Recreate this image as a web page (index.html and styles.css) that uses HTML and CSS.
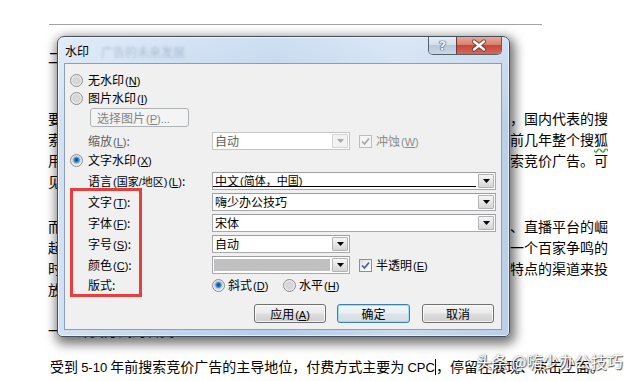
FILE: index.html
```html
<!DOCTYPE html>
<html lang="zh-CN">
<head>
<meta charset="utf-8">
<title>水印</title>
<link rel="stylesheet" href="styles.css">
</head>
<body>
<div class="page">
  <div class="rule"></div>
  <div class="doc">
    <div class="ln head">二、互联网广告的发展历程</div>
    <div class="para p1">
      <div class="ln">要说到互联网广告，就不得不提搜索引擎广告，早在十几年前就已经兴起了，国内代表的搜</div>
      <div class="ln">索引擎是百度，谷歌在当时也占有一定的份额，而另一边，在过去十多年的前几年整个搜<span class="spell">狐</span></div>
      <div class="ln">用户流量的入口都集中在搜索引擎上，因此当时最主要的广告形式就便是搜索竞价广告。可</div>
      <div class="ln">见，搜索竞价广告在当时占据了绝对的主导地位。</div>
    </div>
    <div class="para p2">
      <div class="ln">而随着近几年移动互联网的快速发展，各类社交媒体、资讯平台以及短视频、直播平台的崛</div>
      <div class="ln">起，互联网广告的形式与玩法变得越来越多样化，整个行业也逐渐进入到了一个百家争鸣的</div>
      <div class="ln">时代。广告主可以根据自身产品的属性与受众人群，选择更加符合目标用户特点的渠道来投</div>
      <div class="ln">放广告，从而获得更好的营销效果。</div>
    </div>
    <div class="ln head2">一、计费方式的转变</div>
    <div class="ln last">受到 <span class="lat">5-10</span> 年前搜索竞价广告的主导地位，付费方式主要为 <span class="lat">CPC</span><span class="caret"></span>，停留在展现、点击上面。</div>
  </div>

  <div class="dialog">
    <div class="titlebar">
      <span class="title">水印</span>
      <span class="ghost">广告的未来发展</span>
      <div class="caption-btns">
        <div class="cbtn help">?</div>
        <div class="cbtn close">
          <svg width="44" height="17" viewBox="0 0 44 17">
            <path d="M17 4.5 L27 12.5 M27 4.5 L17 12.5" stroke="#5a2a22" stroke-width="4.2" stroke-linecap="round" fill="none" opacity="0.75"/>
            <path d="M17 4.5 L27 12.5 M27 4.5 L17 12.5" stroke="#ffffff" stroke-width="2.4" stroke-linecap="round" fill="none"/>
          </svg>
        </div>
      </div>
    </div>
    <div class="panel">
      <div class="row opt r1"><span class="radio"></span><span class="otext">无水印<span class="mn">(<u>N</u>)</span></span></div>
      <div class="row opt"><span class="radio"></span><span class="otext">图片水印<span class="mn">(<u>I</u>)</span></span></div>
      <div class="row r3"><div class="pickbtn">选择图片<span class="mn">(<u>P</u>)...</span></div></div>
      <div class="row r4">
        <span class="lbl dim">缩放<span class="mn">(<u>L</u>)</span>:</span>
        <div class="combo short disabled"><span class="val">自动</span><span class="drop"><svg width="7" height="4" viewBox="0 0 7 4"><polygon points="0,0 7,0 3.5,4" fill="#a9a9a9"/></svg></span></div>
        <span class="check dis"><svg width="11" height="11" viewBox="0 0 11 11"><path d="M2 5.5 L4.5 8 L9 2.5" fill="none" stroke="#a6a6a6" stroke-width="1.7"/></svg></span>
        <span class="ctext dim2">冲蚀<span class="mn">(<u>W</u>)</span></span>
      </div>
      <div class="row opt r5"><span class="radio on"></span><span class="otext">文字水印<span class="mn">(<u>X</u>)</span></span></div>
      <div class="row r6">
        <span class="lbl">语言<span class="mn">(国家/地区)</span><span class="mn">(<u>L</u>)</span>:</span>
        <div class="combo long"><span class="val focus">中文<span class="mn">(简体，中国)</span></span><span class="drop"><svg width="7" height="4" viewBox="0 0 7 4"><polygon points="0,0 7,0 3.5,4" fill="#000"/></svg></span></div>
      </div>
      <div class="row rf">
        <span class="lbl">文字<span class="mn">(<u>T</u>)</span>:</span>
        <div class="combo long"><span class="val">嗨少办公技巧</span><span class="drop"><svg width="7" height="4" viewBox="0 0 7 4"><polygon points="0,0 7,0 3.5,4" fill="#000"/></svg></span></div>
      </div>
      <div class="row rf">
        <span class="lbl">字体<span class="mn">(<u>F</u>)</span>:</span>
        <div class="combo long"><span class="val">宋体</span><span class="drop"><svg width="7" height="4" viewBox="0 0 7 4"><polygon points="0,0 7,0 3.5,4" fill="#000"/></svg></span></div>
      </div>
      <div class="row rf">
        <span class="lbl">字号<span class="mn">(<u>S</u>)</span>:</span>
        <div class="combo short"><span class="val">自动</span><span class="drop"><svg width="7" height="4" viewBox="0 0 7 4"><polygon points="0,0 7,0 3.5,4" fill="#000"/></svg></span></div>
      </div>
      <div class="row rf">
        <span class="lbl">颜色<span class="mn">(<u>C</u>)</span>:</span>
        <div class="combo short"><span class="val"><span class="swatch"></span></span><span class="drop"><svg width="7" height="4" viewBox="0 0 7 4"><polygon points="0,0 7,0 3.5,4" fill="#000"/></svg></span></div>
        <span class="check"><svg width="11" height="11" viewBox="0 0 11 11"><path d="M2 5.5 L4.5 8 L9 2.5" fill="none" stroke="#4b5f92" stroke-width="1.7"/></svg></span>
        <span class="ctext">半透明<span class="mn">(<u>E</u>)</span></span>
      </div>
      <div class="row r11">
        <span class="lbl">版式:</span>
        <span class="choice first"><span class="radio on"></span><span class="otext">斜式<span class="mn">(<u>D</u>)</span></span></span>
        <span class="choice"><span class="radio"></span><span class="otext">水平<span class="mn">(<u>H</u>)</span></span></span>
      </div>
      <div class="row btns">
        <div class="btn">应用<span class="mn">(<u>A</u>)</span></div>
        <div class="btn default">确定</div>
        <div class="btn">取消</div>
      </div>
    </div>
  </div>

  <div class="redbox"></div>
  <div class="watermark">头条 @嗨少办公技巧</div>
</div>
</body>
</html>
```

FILE: styles.css
```css
* { box-sizing: border-box; }
html, body { margin: 0; padding: 0; background: #fff; }
.page {
  position: relative;
  width: 631px;
  height: 381px;
  overflow: hidden;
  background: #fff;
  font-family: "Noto Sans CJK SC", "Liberation Sans", sans-serif;
}
.rule {
  margin: 24px 0 0 49px;
  width: 493px;
  height: 1px;
  background: #a3a3a3;
}
.doc {
  padding-left: 48px;
  font-size: 14px;
  line-height: 21px;
  color: #000;
}
.ln { white-space: nowrap; height: 21px; }
.head { margin-top: 22px; }
.p1 { margin-top: 40px; }
.p2 { margin-top: 24px; }
.head2 { margin-top: 20px; }
.last { margin-top: 15px; padding-left: 2px; }
.lat { font-family: "Liberation Sans", sans-serif; font-size: 13px; }
.spell { text-decoration: underline wavy #3fa33f; text-underline-offset: 3px; }
.caret {
  display: inline-block;
  width: 1px;
  height: 16px;
  background: #000;
  vertical-align: -3px;
}

/* dialog */
.dialog {
  position: absolute;
  left: 57px;
  top: 36px;
  width: 453px;
  height: 301px;
  display: flex;
  flex-direction: column;
  padding: 0 7px 6px 6px;
  border: 1px solid #46505d;
  border-radius: 7px 7px 5px 5px;
  background:
    linear-gradient(to bottom, rgba(255,255,255,0.35), rgba(255,255,255,0) 30%),
    linear-gradient(to right, #d2e2f4 0%, #c3d8ef 22%, #b5ceea 48%, #c8dbf0 75%, #bad0e9 100%);
  box-shadow: inset 0 0 0 1px rgba(255,255,255,0.6), 2px 4px 11px 3px rgba(0,0,0,0.55);
  font-size: 12px;
  color: #000;
}
.titlebar {
  height: 26px;
  display: flex;
  align-items: flex-start;
  flex: none;
}
.title {
  padding-left: 1px;
  line-height: 28px;
  font-size: 12px;
  color: #000;
}
.ghost {
  margin-left: 12px;
  line-height: 30px;
  font-size: 12px;
  color: rgba(70, 95, 130, 0.28);
  filter: blur(1.3px);
}
.caption-btns {
  margin-left: auto;
  display: flex;
  height: 18px;
  border: 1px solid #56606e;
  border-top: none;
  border-radius: 0 0 5px 5px;
  overflow: hidden;
}
.cbtn { height: 17px; display: flex; align-items: center; justify-content: center; }
.help {
  width: 27px;
  background: linear-gradient(to bottom, #e6eef7 0%, #d3dfec 45%, #b9c9dc 50%, #c9d6e6 100%);
  font-family: "DejaVu Sans", sans-serif;
  font-weight: bold;
  font-size: 13px;
  color: #eef3f9;
  text-shadow: 0 0 1px #3d4b60, 0 0 1px #3d4b60, 0 0 1px #3d4b60;
  line-height: 17px;
}
.close {
  width: 45px;
  border-left: 1px solid #6a3a34;
  background: linear-gradient(to bottom, #e8a898 0%, #d98070 45%, #c7473a 50%, #d06a58 100%);
}
.panel {
  flex: 1;
  border: 1px solid #8d9eb2;
  background: #f0f0f0;
  display: flex;
  flex-direction: column;
  padding: 0 7px 0 5px;
}
.row { display: flex; align-items: center; height: 18px; line-height: 18px; white-space: nowrap; flex: none; }
.r1 { margin-top: 7px; }
.r3 { margin-top: 1px; height: 19px; padding-left: 20px; }
.r4 { margin-top: 5px; }
.r5 { margin-top: 1px; }
.r6 { margin-top: 3px; }
.rf { margin-top: 3px; }
.r11 { margin-top: 2px; }
.btns { margin-top: 10px; height: 19px; justify-content: flex-end; }

.mn { margin-left: 1px; font-family: "Liberation Sans", "Noto Sans CJK SC", sans-serif; font-size: 11px; }
.mn u { text-underline-offset: 1px; }

.radio {
  flex: none;
  width: 13px;
  height: 13px;
  border-radius: 50%;
  border: 1px solid #8c8c8c;
  background: radial-gradient(circle at 50% 50%, #dedede 0, #d2d2d2 3px, #eaeaea 5px, #f8f8f8 6px);
}
.radio.on {
  background: radial-gradient(circle at 50% 45%, #123f6c 0, #2a73b8 1.8px, #5fa8e2 3px, #a9d6f5 3.6px, #d8d8d8 4.3px, #ececec 5px, #f8f8f8 6px);
}
.opt .otext { margin-left: 5px; }
.choice { display: flex; align-items: center; }
.choice .otext { margin-left: 3px; }
.choice.first { width: 71px; }

.pickbtn {
  width: 99px;
  height: 19px;
  border: 1px solid #adb2b5;
  border-radius: 3px;
  background: #f4f4f4;
  color: #838383;
  line-height: 17px;
  padding-left: 6px;
}
.lbl { flex: none; width: 142px; padding-left: 18px; }
.dim { color: #5e5e5e; }
.dim2 { color: #8d8d8d; }

.combo {
  flex: none;
  height: 18px;
  display: flex;
  border: 1px solid #a7a9ad;
  border-top-color: #9b9da1;
  background: #fff;
}
.combo.long { width: 284px; }
.combo.short { width: 138px; }
.combo.disabled { border-color: #c6c6c6; }
.combo.disabled .val { color: #5e5e5e; }
.val {
  flex: 1;
  display: flex;
  align-items: center;
  padding-left: 2px;
  line-height: 16px;
  overflow: hidden;
}
.val.focus {
  background: linear-gradient(#000, #000) no-repeat left 0 bottom 2px / 100% 1px;
  margin-right: 1px;
}
.swatch {
  display: block;
  width: 116px;
  height: 12px;
  background: #c0c0c0;
  margin-left: -1px;
}
.drop {
  flex: none;
  width: 16px;
  margin: 1px;
  border: 1px solid #b2b2b2;
  border-radius: 1px;
  background: linear-gradient(to bottom, #f6f6f6 0%, #e6e6e6 50%, #d6d6d6 100%);
  display: flex;
  align-items: center;
  justify-content: center;
}
.disabled .drop { border-color: #d4d4d4; background: #f2f2f2; }

.check {
  flex: none;
  width: 13px;
  height: 13px;
  margin-left: 9px;
  border: 1px solid #8e8f8f;
  background: linear-gradient(135deg, #dedede 0%, #f4f4f4 60%, #ffffff 100%);
  display: flex;
  align-items: center;
  justify-content: center;
}
.check.dis { border-color: #bcbcbc; background: #f4f4f4; }
.ctext { margin-left: 4px; }

.btn {
  flex: none;
  width: 72px;
  height: 19px;
  margin-left: 11px;
  border: 1px solid #707070;
  border-radius: 3px;
  background: linear-gradient(to bottom, #f3f3f3 0%, #ebebeb 48%, #dddddd 52%, #cfcfcf 100%);
  box-shadow: inset 0 0 0 1px rgba(255,255,255,0.75);
  text-align: center;
  line-height: 17px;
}
.btn.default {
  width: 73px;
  margin-right: 1px;
  border-color: #3c7fb1;
  box-shadow: inset 0 0 0 1px #9fdcf6;
  background: linear-gradient(to bottom, #f2f7fa 0%, #e9eff3 48%, #dde5ea 52%, #d2dce2 100%);
}

.redbox {
  position: absolute;
  left: 70px;
  top: 188px;
  width: 72px;
  height: 109px;
  border: 3px solid #e6403e;
}
.watermark {
  position: absolute;
  left: 476px;
  top: 351px;
  font-size: 16px;
  line-height: 20px;
  color: #ffffff;
  white-space: nowrap;
  text-shadow: 1px 1px 1px rgba(40,40,40,0.8), 0 0 2px rgba(60,60,60,0.7);
}
```
